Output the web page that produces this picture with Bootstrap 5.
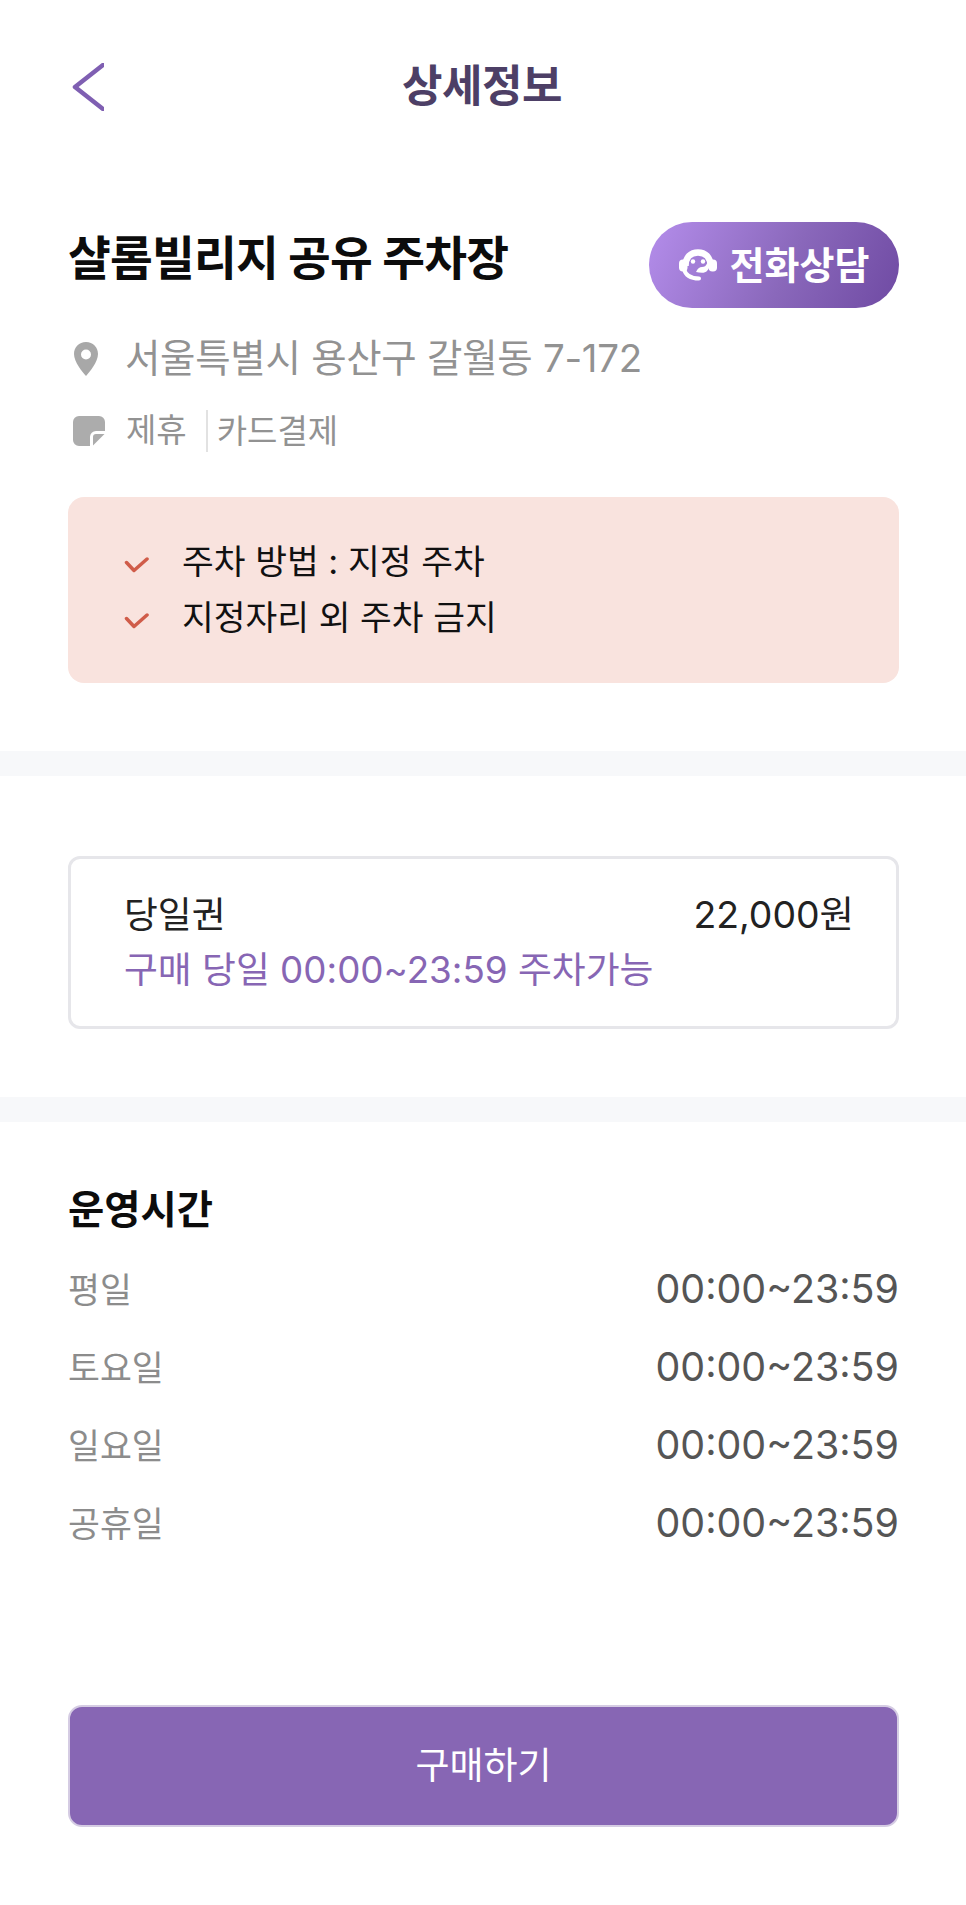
<!DOCTYPE html>
<html lang="ko">
  <head>
    <title>상세정보</title>
    <meta charset="utf-8" />
    <meta name="viewport" content="width=device-width, initial-scale=1" />
    <link href="https://cdn.jsdelivr.net/npm/bootstrap@5.3.2/dist/css/bootstrap.min.css" rel="stylesheet" />
    <script src="https://cdn.jsdelivr.net/npm/bootstrap@5.3.2/dist/js/bootstrap.bundle.min.js"></script>
    <style>
      body { font-family: Inter, "Noto Sans CJK KR", sans-serif; background: #fff; color: #111; }
      .page-wrap { width: 966px; height: 1905px; overflow: hidden; }
      .top-bar { height: 222px; padding: 63px 68px 0 72px; align-items: flex-start; }
      .top-title { flex: 1; text-align: center; font-size: 44px; font-weight: 700; color: #4d3f66; line-height: 46px; margin-left: -38px; letter-spacing: -.5px; }
      .info-block { padding: 0 67px 0 68px; height: 529px; }
      .place-name { font-size: 46.500px; font-weight: 700; line-height: 72px; margin: 0; color: #0c0c0c; letter-spacing: -.8px; }
      .call-btn { width: 250px; height: 86px; border-radius: 43px; background: linear-gradient(115deg, #b48deb 0%, #8a68bb 55%, #6f4aa3 100%); color: #fff; font-size: 38px; font-weight: 700; border: 0; gap: 13px; }
      .addr-row { margin-top: 29px; height: 44px; color: #929292; font-size: 38.500px; gap: 27px; padding-left: 6px; letter-spacing: -.3px; }
      .tag-row { margin-top: 28px; height: 44px; color: #929292; font-size: 33px; gap: 21px; padding-left: 5px; }
      .tag-sep { border-left: 2px solid #e2e2e2; padding-left: 9px; line-height: 42px; margin-left: 19px; }
      .notice-box { margin-top: 44px; height: 186px; background: #f9e3de; border-radius: 16px; padding: 37px 56px; font-size: 34.500px; color: #111; }
      .notice-item { height: 56px; gap: 33px; }
      .check-mark { margin-top: 5px; }
      .gray-band { height: 25px; background: #f7f8fa; }
      .ticket-wrap { height: 321px; padding: 80px 67px 0 68px; }
      .ticket-box { height: 173px; border: 3px solid #e6e6ea; border-radius: 12px; padding: 30px 42px 0 53px; }
      .ticket-name { font-size: 36.800px; color: #222; line-height: 52px; }
      .ticket-price { font-size: 37.400px; }
      .ticket-desc { font-size: 36.800px; color: #8766b4; line-height: 58px; }
      .hours-wrap { padding: 0 67px 0 68px; }
      .hours-title { font-size: 39.400px; font-weight: 700; margin: 60px 0 13px; line-height: 56px; color: #0c0c0c; }
      .hours-row { height: 78px; }
      .hours-day { font-size: 34.700px; color: #8c8c8c; }
      .hours-time { font-size: 39.400px; color: #555; }
      .buy-area { margin-top: 142px; }
      .buy-btn { margin: 0 67px 0 68px; width: 831px; height: 122px; background: #8766b4; border: 2px solid #d5cce3; border-radius: 14px; color: #fff; font-size: 37px; }
      .buy-btn:hover { background: #8766b4; color: #fff; border-color: #d5cce3; }
    </style>
  </head>
  <body>
    <div class="page-wrap">
      <div class="top-bar d-flex">
        <svg width="32" height="48" viewBox="0 0 32 48"><path d="M31 2 3 24l0 0 28 22" fill="none" stroke="#7f5fb2" stroke-width="4.500" stroke-linecap="round" stroke-linejoin="round"/></svg>
        <div class="top-title">상세정보</div>
      </div>

      <div class="info-block">
        <div class="d-flex justify-content-between">
          <h1 class="place-name">샬롬빌리지 공유 주차장</h1>
          <button class="call-btn btn d-flex align-items-center justify-content-center p-0">
            <svg width="38" height="32" viewBox="0 0 38 32">
              <path d="M6.500 17C6.500 8 12 3.500 19 3.500S31.500 8 31.500 17" fill="none" stroke="#fff" stroke-width="6.500"/>
              <rect x="0" y="10.500" width="8.500" height="12" rx="4" fill="#fff"/>
              <rect x="29.500" y="10.500" width="8.500" height="12" rx="4" fill="#fff"/>
              <path d="M5 20C6.500 26.500 12 29.500 20 29.500" fill="none" stroke="#fff" stroke-width="4" stroke-linecap="round"/>
              <circle cx="14" cy="12.500" r="2.200" fill="#fff"/>
              <circle cx="24" cy="12.500" r="2.200" fill="#fff"/>
              <path d="M17 23c4 .8 9 1.500 11-1 2-2.500 3-5 3-7l-3-.5c-1 2.500-2.500 3.500-5 3.500-2.500 0-4.500 1.500-6 5Z" fill="#fff"/>
            </svg>
            <span>전화상담</span>
          </button>
        </div>

        <div class="addr-row d-flex align-items-center">
          <svg width="24" height="34" viewBox="0 0 24 34"><path fill="#a8a8a8" fill-rule="evenodd" d="M12 0C5 0 0 5.300 0 12c0 8 8.500 18 12 22 3.500-4 12-14 12-22C24 5.300 19 0 12 0Zm0 7.500a5 5 0 1 1 0 10 5 5 0 0 1 0-10Z"/></svg>
          <span>서울특별시 용산구 갈월동 7-172</span>
        </div>

        <div class="tag-row d-flex align-items-center">
          <svg width="32" height="30" viewBox="0 0 32 30"><path fill="#acacac" d="M6 0h20a6 6 0 0 1 6 6v9h-9a6 6 0 0 0-6 6v9H6a6 6 0 0 1-6-6V6a6 6 0 0 1 6-6Z"/><path fill="#acacac" d="M31.500 18 20 29.500V21a3 3 0 0 1 3-3Z"/></svg>
          <div class="d-flex align-items-center">
            <span>제휴</span>
            <span class="tag-sep">카드결제</span>
          </div>
        </div>

        <div class="notice-box">
          <div class="notice-item d-flex align-items-center">
            <svg class="check-mark" width="25" height="18" viewBox="0 0 25 18"><path d="M2.500 6.500 10 14.500 23 3" fill="none" stroke="#d05c49" stroke-width="3.500" stroke-linecap="round" stroke-linejoin="round"/></svg>
            <span>주차 방법 : 지정 주차</span>
          </div>
          <div class="notice-item d-flex align-items-center">
            <svg class="check-mark" width="25" height="18" viewBox="0 0 25 18"><path d="M2.500 6.500 10 14.500 23 3" fill="none" stroke="#d05c49" stroke-width="3.500" stroke-linecap="round" stroke-linejoin="round"/></svg>
            <span>지정자리 외 주차 금지</span>
          </div>
        </div>
      </div>

      <div class="gray-band"></div>

      <div class="ticket-wrap">
        <div class="ticket-box">
          <div class="d-flex justify-content-between ticket-name">
            <span>당일권</span>
            <span class="ticket-price">22,000원</span>
          </div>
          <div class="ticket-desc">구매 당일 00:00~23:59 주차가능</div>
        </div>
      </div>

      <div class="gray-band"></div>

      <div class="hours-wrap">
        <div class="hours-title">운영시간</div>
        <div class="hours-row d-flex justify-content-between align-items-center"><span class="hours-day">평일</span><span class="hours-time">00:00~23:59</span></div>
        <div class="hours-row d-flex justify-content-between align-items-center"><span class="hours-day">토요일</span><span class="hours-time">00:00~23:59</span></div>
        <div class="hours-row d-flex justify-content-between align-items-center"><span class="hours-day">일요일</span><span class="hours-time">00:00~23:59</span></div>
        <div class="hours-row d-flex justify-content-between align-items-center"><span class="hours-day">공휴일</span><span class="hours-time">00:00~23:59</span></div>
      </div>

      <div class="buy-area">
        <button class="buy-btn btn d-block">구매하기</button>
      </div>
    </div>
  </body>
</html>
